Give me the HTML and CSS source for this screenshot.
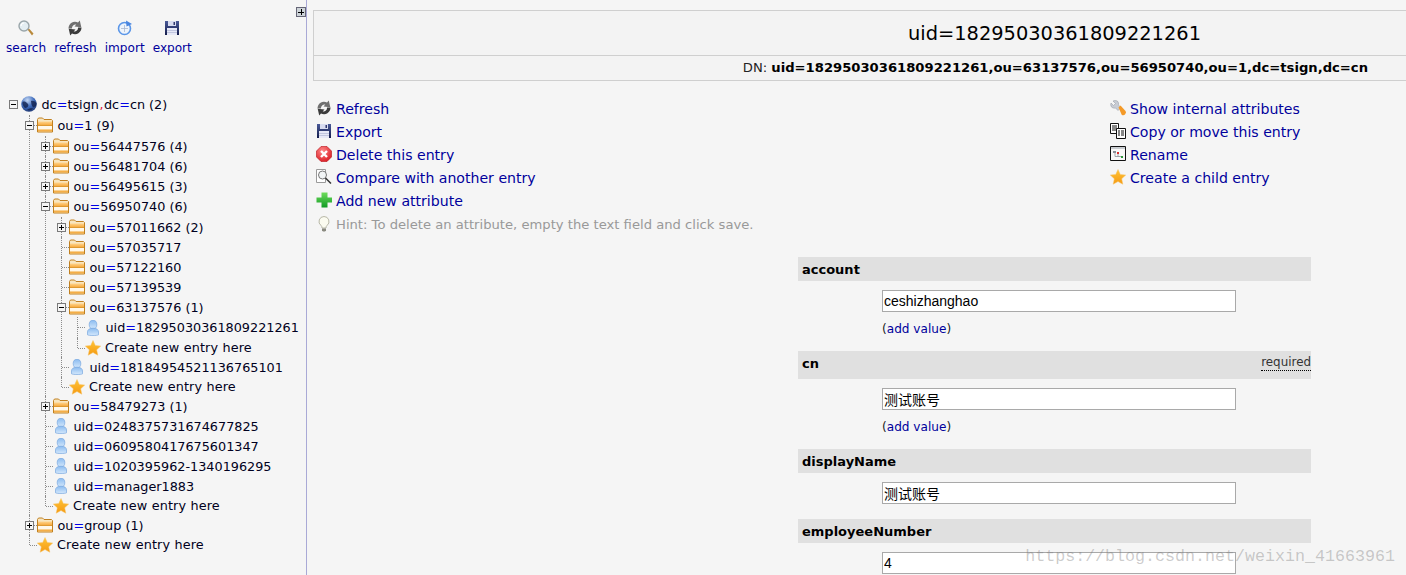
FILE: index.html
```html
<!DOCTYPE html>
<html lang="en">
<head>
<meta charset="utf-8">
<title>uid=18295030361809221261</title>
<link rel="stylesheet" href="styles.css">
</head>
<body>
<svg class="defs" xmlns="http://www.w3.org/2000/svg" aria-hidden="true">
  <defs>
    <linearGradient id="g-folder" x1="0" y1="0" x2="0" y2="1"><stop offset="0" stop-color="#ffd48c"/><stop offset="1" stop-color="#f5a02c"/></linearGradient>
    <linearGradient id="g-user" x1="0" y1="0" x2="0" y2="1"><stop offset="0" stop-color="#8cbcf0"/><stop offset="1" stop-color="#d4e8fc"/></linearGradient>
    <linearGradient id="g-star" x1="0" y1="0" x2="0" y2="1"><stop offset="0" stop-color="#ffc437"/><stop offset="1" stop-color="#f59a12"/></linearGradient>
    <radialGradient id="g-globe" cx=".4" cy=".25" r=".85"><stop offset="0" stop-color="#c4d8f4"/><stop offset=".5" stop-color="#3f6cbc"/><stop offset="1" stop-color="#1a3068"/></radialGradient>
    <linearGradient id="g-floppy" x1="0" y1="0" x2="0" y2="1"><stop offset="0" stop-color="#4a5a98"/><stop offset="1" stop-color="#141c4c"/></linearGradient>
    <radialGradient id="g-red" cx=".4" cy=".3" r=".8"><stop offset="0" stop-color="#ff8a8a"/><stop offset="1" stop-color="#d8141c"/></radialGradient>
    <linearGradient id="g-green" x1="0" y1="0" x2="0" y2="1"><stop offset="0" stop-color="#6fdc5c"/><stop offset="1" stop-color="#109a24"/></linearGradient>
  </defs>
  <symbol id="i-globe" viewBox="0 0 16 16"><circle cx="8" cy="8" r="7.800" fill="url(#g-globe)"/><path d="M1.500 6c2-1 3.500 0 4.500 1s2 2 1 3.500-3 2-4 .5-2-3.500-1.500-5zM10 5c2-.5 4 .5 5.500 2l-.5 3-3 1.500-1.500-3zM6 14c1.500-1.500 4-2 6-1.500-1.500 2-4 2.500-6 1.500z" fill="#12224e" opacity=".8"/></symbol>
  <symbol id="i-folder" viewBox="0 0 16 16"><path d="M.5 15V2.500l1-1.500h4L7 2.500h7.500l1 1V15z" fill="#f8e6c0" stroke="#c08020"/><path d="M1 4.500h14V9H1z" fill="url(#g-folder)"/><path d="M1 9h14v3.500H1z" fill="#fff8ea"/><path d="M1 12.500h14V14.500H1z" fill="#f4ae48"/><path d="M1 8.500h14" stroke="#d8962e" stroke-width=".8"/></symbol>
  <symbol id="i-user" viewBox="0 0 16 16"><ellipse cx="8" cy="4.600" rx="3.800" ry="4.300" fill="url(#g-user)" stroke="#78a8e0" stroke-width=".7"/><path d="M2.500 14.800v-2.800c0-2.500 2-3.800 5.500-3.800s5.500 1.300 5.500 3.800v2.800c-1.500 1-9.500 1-11 0z" fill="url(#g-user)" stroke="#78a8e0" stroke-width=".7"/></symbol>
  <symbol id="i-star" viewBox="0 0 16 16"><path d="M8 .5l2.300 5 5.400.6-4 3.700 1.100 5.400L8 12.500l-4.800 2.700 1.100-5.400-4-3.700 5.400-.6z" fill="url(#g-star)" stroke="#f7c468" stroke-width=".5"/></symbol>
  <symbol id="i-search" viewBox="0 0 16 16"><path d="M9.500 9.500l1.500-1 4.500 5-1.500 2z" fill="#b98a3c"/><circle cx="6" cy="6" r="5" fill="#e4eef2" stroke="#9aa6aa" stroke-width="1.400"/><path d="M3 6a3 3 0 0 1 3-3" fill="none" stroke="#fff" stroke-width="1.200"/></symbol>
  <symbol id="i-refresh" viewBox="0 0 16 16"><path d="M1.500 8.500A6.500 6.500 0 0 1 11 2.600L12.800.4l1.500 6.800-6.800-.7 1.800-2A3.700 3.700 0 0 0 5 8.500z" fill="#707070"/><path d="M14.500 7.500A6.500 6.500 0 0 1 5 13.400L3.200 15.600l-1.500-6.800 6.800.7-1.800 2a3.700 3.700 0 0 0 4.300-4z" fill="#3c3c3c"/></symbol>
  <symbol id="i-import" viewBox="0 0 16 16"><circle cx="7.500" cy="8.500" r="6" fill="#eef4fc" stroke="#5a96e8" stroke-width="1.600"/><path d="M7.500 5v7M4 8.500h7" stroke="#a8b8d0" stroke-width=".8"/><path d="M9 .5l6 3.500-5.500 2.500z" fill="#4a86e0"/></symbol>
  <symbol id="i-floppy" viewBox="0 0 16 16"><path d="M1 1h14v14H1z" fill="url(#g-floppy)"/><path d="M4 1h8v5H4z" fill="#d8dcf0"/><path d="M9.500 2h1.500v3H9.500z" fill="#30386e"/><path d="M3 8h10v7H3z" fill="#e6e8f6"/><path d="M3 10.500h10M3 12.500h10" stroke="#a8aed0" stroke-width=".6"/></symbol>
  <symbol id="i-delete" viewBox="0 0 16 16"><path d="M5 .5h6L15.500 5v6L11 15.500H5L.5 11V5z" fill="url(#g-red)" stroke="#b81018" stroke-width=".6"/><path d="M5 5l6 6M11 5l-6 6" stroke="#fff" stroke-width="2.400"/></symbol>
  <symbol id="i-compare" viewBox="0 0 16 16"><path d="M.5 .5h9v13h-9z" fill="#fff" stroke="#9a9a9a"/><circle cx="6.500" cy="6" r="4" fill="#f2f5f6" stroke="#777"/><path d="M9.500 9l5.500 5.500" stroke="#333" stroke-width="1.500"/></symbol>
  <symbol id="i-add" viewBox="0 0 16 16"><path d="M5.500 .5h6v5h4.500v5h-4.500v5h-6v-5H.5v-5h5z" fill="url(#g-green)"/></symbol>
  <symbol id="i-bulb" viewBox="0 0 16 16"><path d="M8 .5a5 5 0 0 0-3 9c.8.7 1 1.500 1 2.500h4c0-1 .2-1.800 1-2.500a5 5 0 0 0-3-9z" fill="#fbfbf0" stroke="#b8b8a8"/><path d="M6 12.500h4v2l-1 1H7l-1-1z" fill="#8a8a80"/></symbol>
  <symbol id="i-wrench" viewBox="0 0 16 16"><path d="M1 3l2.500 2.500 2-2L3 1c2.500-1 5-.5 5.500 2 .2 1 0 1.500 0 2L11 7.500 8 10.500 5.500 8c-.8.2-1.500.2-2.500 0C1 7.200.2 5 1 3z" fill="#c8ccd4" stroke="#9096a0" stroke-width=".5"/><path d="M8.500 7.500l2-2 5 5.500c.7 1 .5 2.500-.5 3.500s-2.500 1-3.300.2z" fill="#f49a28"/></symbol>
  <symbol id="i-copy" viewBox="0 0 16 16"><path d="M.5.5h8v10h-8z" fill="#fff" stroke="#111"/><path d="M2 3h5M2 5h5M2 7h5" stroke="#111"/><path d="M6.500 5.500h9v10h-9z" fill="#fff" stroke="#111"/><path d="M8 8h2M11 8h3M8 10h2M11 10h3M8 12h2M11 12h3" stroke="#111"/></symbol>
  <symbol id="i-rename" viewBox="0 0 16 16"><path d="M.5 .5h15v14h-15z" fill="#f8f8f8" stroke="#111"/><path d="M1 1h14v2H1z" fill="#c8ccd0"/><path d="M3 5h3v2H3zM3 8.500h2" fill="#8a9098"/><path d="M7 6h2v2H7z" fill="#d83030"/><path d="M11 10h2v2h-2z" fill="#2e9a3c"/><path d="M5 7v3.500h6M8 8v2.500" fill="none" stroke="#8a9098" stroke-width=".8"/></symbol>
</svg>

<div class="page">
  <aside class="side">
    <button class="toggle" type="button" aria-label="Expand"></button>
    <nav class="tools">
      <a class="tool" href="#"><svg class="ic"><use href="#i-search"/></svg>search</a>
      <a class="tool" href="#"><svg class="ic"><use href="#i-refresh"/></svg>refresh</a>
      <a class="tool" href="#"><svg class="ic"><use href="#i-import"/></svg>import</a>
      <a class="tool" href="#"><svg class="ic"><use href="#i-floppy"/></svg>export</a>
    </nav>
    <ul class="tree">
      <li class="root">
        <div class="row"><span class="exp minus"></span><svg class="ic"><use href="#i-globe"/></svg><a href="#">dc<b>=</b>tsign<i>,</i>dc<b>=</b>cn (2)</a></div>
        <ul class="gap">
          <li>
            <div class="row"><span class="exp minus"></span><svg class="ic"><use href="#i-folder"/></svg><a href="#">ou<b>=</b>1 (9)</a></div>
            <ul class="gap">
              <li><div class="row"><span class="exp"></span><svg class="ic"><use href="#i-folder"/></svg><a href="#">ou<b>=</b>56447576 (4)</a></div></li>
              <li><div class="row"><span class="exp"></span><svg class="ic"><use href="#i-folder"/></svg><a href="#">ou<b>=</b>56481704 (6)</a></div></li>
              <li><div class="row"><span class="exp"></span><svg class="ic"><use href="#i-folder"/></svg><a href="#">ou<b>=</b>56495615 (3)</a></div></li>
              <li>
                <div class="row"><span class="exp minus"></span><svg class="ic"><use href="#i-folder"/></svg><a href="#">ou<b>=</b>56950740 (6)</a></div>
                <ul class="gap">
                  <li><div class="row"><span class="exp"></span><svg class="ic"><use href="#i-folder"/></svg><a href="#">ou<b>=</b>57011662 (2)</a></div></li>
                  <li><div class="row"><span class="leaf"></span><svg class="ic"><use href="#i-folder"/></svg><a href="#">ou<b>=</b>57035717</a></div></li>
                  <li><div class="row"><span class="leaf"></span><svg class="ic"><use href="#i-folder"/></svg><a href="#">ou<b>=</b>57122160</a></div></li>
                  <li><div class="row"><span class="leaf"></span><svg class="ic"><use href="#i-folder"/></svg><a href="#">ou<b>=</b>57139539</a></div></li>
                  <li>
                    <div class="row"><span class="exp minus"></span><svg class="ic"><use href="#i-folder"/></svg><a href="#">ou<b>=</b>63137576 (1)</a></div>
                    <ul>
                      <li><div class="row wide"><span class="leaf"></span><svg class="ic"><use href="#i-user"/></svg><a href="#">uid<b>=</b>18295030361809221261</a></div></li>
                      <li><div class="row star"><span class="leaf"></span><svg class="ic"><use href="#i-star"/></svg><a href="#">Create new entry here</a></div></li>
                    </ul>
                  </li>
                  <li><div class="row"><span class="leaf"></span><svg class="ic"><use href="#i-user"/></svg><a href="#">uid<b>=</b>18184954521136765101</a></div></li>
                  <li><div class="row star"><span class="leaf"></span><svg class="ic"><use href="#i-star"/></svg><a href="#">Create new entry here</a></div></li>
                </ul>
              </li>
              <li><div class="row"><span class="exp"></span><svg class="ic"><use href="#i-folder"/></svg><a href="#">ou<b>=</b>58479273 (1)</a></div></li>
              <li><div class="row"><span class="leaf"></span><svg class="ic"><use href="#i-user"/></svg><a href="#">uid<b>=</b>0248375731674677825</a></div></li>
              <li><div class="row"><span class="leaf"></span><svg class="ic"><use href="#i-user"/></svg><a href="#">uid<b>=</b>0609580417675601347</a></div></li>
              <li><div class="row"><span class="leaf"></span><svg class="ic"><use href="#i-user"/></svg><a href="#">uid<b>=</b>1020395962-1340196295</a></div></li>
              <li><div class="row"><span class="leaf"></span><svg class="ic"><use href="#i-user"/></svg><a href="#">uid<b>=</b>manager1883</a></div></li>
              <li><div class="row star"><span class="leaf"></span><svg class="ic"><use href="#i-star"/></svg><a href="#">Create new entry here</a></div></li>
            </ul>
          </li>
          <li><div class="row"><span class="exp"></span><svg class="ic"><use href="#i-folder"/></svg><a href="#">ou<b>=</b>group (1)</a></div></li>
          <li><div class="row star"><span class="leaf"></span><svg class="ic"><use href="#i-star"/></svg><a href="#">Create new entry here</a></div></li>
        </ul>
      </li>
    </ul>
  </aside>

  <main class="main">
    <header class="head">
      <h1 class="title">uid=18295030361809221261</h1>
      <p class="dn">DN: <strong>uid=18295030361809221261,ou=63137576,ou=56950740,ou=1,dc=tsign,dc=cn</strong></p>
    </header>

    <section class="actions">
      <ul class="acts">
        <li><svg class="ic"><use href="#i-refresh"/></svg><a href="#">Refresh</a></li>
        <li><svg class="ic"><use href="#i-floppy"/></svg><a href="#">Export</a></li>
        <li><svg class="ic"><use href="#i-delete"/></svg><a href="#">Delete this entry</a></li>
        <li><svg class="ic"><use href="#i-compare"/></svg><a href="#">Compare with another entry</a></li>
        <li><svg class="ic"><use href="#i-add"/></svg><a href="#">Add new attribute</a></li>
        <li class="hint"><svg class="ic"><use href="#i-bulb"/></svg><span>Hint: To delete an attribute, empty the text field and click save.</span></li>
      </ul>
      <ul class="acts">
        <li><svg class="ic"><use href="#i-wrench"/></svg><a href="#">Show internal attributes</a></li>
        <li><svg class="ic"><use href="#i-copy"/></svg><a href="#">Copy or move this entry</a></li>
        <li><svg class="ic"><use href="#i-rename"/></svg><a href="#">Rename</a></li>
        <li><svg class="ic"><use href="#i-star"/></svg><a href="#">Create a child entry</a></li>
      </ul>
    </section>

    <form class="attrs">
      <div class="attr-head">account</div>
      <div class="attr-val"><input class="field" type="text" value="ceshizhanghao"></div>
      <div class="add">(<a href="#">add value</a>)</div>

      <div class="attr-head tall">cn<span class="req">required</span></div>
      <div class="attr-val"><input class="field" type="text" value="测试账号"></div>
      <div class="add">(<a href="#">add value</a>)</div>

      <div class="attr-head">displayName</div>
      <div class="attr-val last"><input class="field" type="text" value="测试账号"></div>

      <div class="attr-head">employeeNumber</div>
      <div class="attr-val"><input class="field" type="text" value="4"></div>
    </form>
  </main>
</div>
<div class="mark">https://blog.csdn.net/weixin_41663961</div>
</body>
</html>
```
FILE: styles.css
```css
* { box-sizing: border-box; }
html, body { margin: 0; height: 575px; overflow: hidden; }
body {
  background: #f5f5f5;
  color: #000;
  font-family: "DejaVu Sans", Verdana, sans-serif;
  font-size: 12.8px;
  position: relative;
}
a { color: #00009c; text-decoration: none; }
ul { list-style: none; margin: 0; padding: 0; }
.defs { display: block; width: 0; height: 0; }
.ic { width: 16px; height: 16px; flex: none; display: block; }

.page { display: flex; height: 575px; }

/* left panel */
.side {
  flex: none;
  width: 307px;
  border-right: 1px solid #a9a9d6;
  position: relative;
  padding-top: 20px;
}
.toggle {
  position: absolute;
  top: 7px;
  left: 296px;
  width: 10px;
  height: 10px;
  padding: 0;
  border: 1px solid #667;
  background: linear-gradient(#000, #000) center / 6px 1px no-repeat,
              linear-gradient(#000, #000) center / 1px 6px no-repeat,
              #cdd3d8;
}
.tools { display: flex; gap: 8px; padding-left: 6px; height: 74px; }
.tool {
  display: flex;
  flex-direction: column;
  align-items: center;
  gap: 4px;
  font-size: 12.1px;
  line-height: 15px;
}
.tool .ic { margin-bottom: 1px; }

.tree { padding-left: 5px; }
.tree ul { padding-left: 16px; }
.tree ul.gap { padding-top: 1px; }
.tree li { position: relative; }
.tree li li::before {
  content: "";
  position: absolute;
  left: 8px;
  top: 0;
  bottom: 0;
  border-left: 1px dotted #8c8c8c;
}
.tree li li:last-child::before { bottom: auto; height: 10px; }
.tree li li::after {
  content: "";
  position: absolute;
  left: 9px;
  top: 10px;
  width: 7px;
  border-top: 1px dotted #8c8c8c;
}
.row {
  display: flex;
  align-items: center;
  height: 20px;
  position: relative;
  z-index: 1;
}
.row.wide { height: 21px; }
.row.star { height: 19px; }
.row a { color: #000020; margin-left: 4.5px; white-space: nowrap; }
.row.star a { margin-left: 4px; letter-spacing: .14px; }
.row b { font-weight: normal; color: #0000e6; }
.row i { font-style: normal; color: #e0203c; margin: 0 .5px; }
.leaf { flex: none; width: 16px; }
.exp {
  flex: none;
  width: 9px;
  height: 9px;
  margin: 0 3px 0 4px;
  border: 1px solid #7a7a7a;
  background: linear-gradient(#000, #000) center / 5px 1px no-repeat,
              linear-gradient(#000, #000) center / 1px 5px no-repeat,
              #f5f5f5;
}
.exp.minus {
  background: linear-gradient(#000, #000) center / 5px 1px no-repeat, #f5f5f5;
}

/* right panel */
.main { flex: 1; min-width: 0; margin-left: 6px; padding-top: 10px; }
.head { border: 1px solid #cfcfcf; border-right: 0; background: #f3f3f3; }
.title {
  margin: 0;
  height: 45px;
  padding-left: 594px;
  font-size: 19.4px;
  font-weight: normal;
  line-height: 46px;
  white-space: nowrap;
  border-bottom: 1px solid #cfcfcf;
}
.dn {
  margin: 0;
  height: 24px;
  font-size: 13.15px;
  line-height: 24px;
  text-align: right;
  padding-right: 38px;
  color: #222;
  white-space: nowrap;
}
.dn strong { color: #000; }

.actions {
  display: grid;
  grid-template-columns: 794px auto;
  padding: 16px 0 0 3px;
}
.acts li {
  display: flex;
  align-items: center;
  gap: 4px;
  height: 23px;
  font-size: 14.1px;
  white-space: nowrap;
}
.acts li .ic { margin-top: -2px; }
.acts .hint { color: #999; margin-top: 1px; font-size: 13.15px; }

.attrs { width: 513px; margin: 21px 0 0 485px; }
.attr-head {
  display: flex;
  align-items: center;
  justify-content: space-between;
  height: 24px;
  padding-left: 4px;
  background: #e0e0e0;
  font-weight: bold;
  font-size: 13px;
}
.attr-head.tall { height: 28px; padding-bottom: 4px; }
.req {
  font-weight: normal;
  font-size: 11.9px;
  line-height: 15px;
  color: #333;
  border-bottom: 1px dotted #000;
}
.attr-val { padding: 9px 0 0 84px; }
.attr-val.last { padding-bottom: 15px; }
.field {
  display: block;
  width: 354px;
  height: 22px;
  padding: 0 1px;
  border: 1px solid #a9a9a9;
  border-radius: 0;
  background: #fff;
  color: #000;
  font-family: "Liberation Sans", "Noto Sans CJK SC", sans-serif;
  font-size: 14px;
}
.add {
  height: 39px;
  padding: 7px 0 0 84px;
  font-size: 12.1px;
  line-height: 20px;
  color: #222;
}

.mark {
  position: absolute;
  right: 11px;
  bottom: 8px;
  font-family: "Liberation Mono", monospace;
  font-size: 16.67px;
  line-height: 20px;
  color: rgba(120, 120, 120, .38);
  white-space: nowrap;
}
```
